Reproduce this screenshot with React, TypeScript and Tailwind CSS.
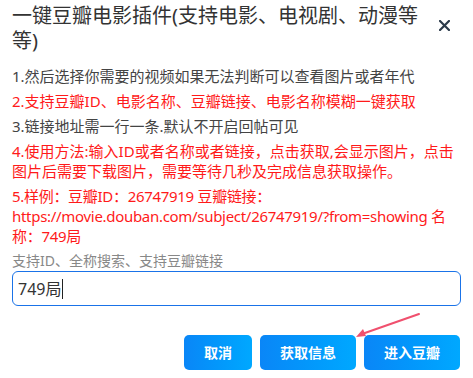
export default function App() {
  const font = {
    fontFamily: '"Noto Sans", "Noto Sans CJK SC", sans-serif',
  };

  return (
    <div
      className="relative h-[378px] w-[473px] overflow-hidden bg-white px-3 text-[#333]"
      style={font}
    >
      {/* header */}
      <div className="flex items-start justify-between pt-[3px]">
        <h1 className="w-[424px] text-[20px] leading-[25px] font-normal text-[#333]">
          一键豆瓣电影插件(支持电影、电视剧、动漫等等)
        </h1>
        <button className="mt-[17px] mr-[11px] text-[#2b3a4a]">
          <svg width="11" height="11" viewBox="0 0 11 11">
            <path
              d="M1 1 L10 10 M10 1 L1 10"
              stroke="currentColor"
              strokeWidth="2.2"
              strokeLinecap="square"
            />
          </svg>
        </button>
      </div>

      {/* notes */}
      <div className="mt-[13px] text-[15px] leading-[20px]">
        <p className="mb-[5px] text-[#444]">
          1.然后选择你需要的视频如果无法判断可以查看图片或者年代
        </p>
        <p className="mb-[5px] text-[#ff1a1a]">
          2.支持豆瓣ID、电影名称、豆瓣链接、电影名称模糊一键获取
        </p>
        <p className="mb-[5px] text-[#444]">
          3.链接地址需一行一条.默认不开启回帖可见
        </p>
        <p className="mb-[5px] text-[#ff1a1a]">
          4.使用方法:输入ID或者名称或者链接，点击获取,会显示图片，点击图片后需要下载图片，需要等待几秒及完成信息获取操作。
        </p>
        <p className="tracking-[-0.3px] text-[#ff1a1a]">
          5.样例：豆瓣ID：26747919 豆瓣链接：https://movie.douban.com/subject/26747919/?from=showing
          名称：749局
        </p>
      </div>

      {/* input */}
      <div className="mt-[6px] text-[14px] leading-[18px] text-[#888]">
        支持ID、全称搜索、支持豆瓣链接
      </div>
      <div className="mt-[1px] flex h-[35px] items-center rounded-[6px] border-[1.5px] border-[#1a73e8] px-[5px] text-[16px] text-[#333]">
        <span>749局</span>
        <span className="ml-px h-[20px] w-px bg-[#222]" />
      </div>

      {/* actions */}
      <div className="mt-[29px] flex justify-end gap-2 pr-px">
        <button className="h-[35px] w-[68px] rounded-[5px] bg-gradient-to-r from-[#0a86f7] to-[#00a8ff] text-[14px] font-bold text-white">
          取消
        </button>
        <button className="h-[35px] w-[96px] rounded-[5px] bg-gradient-to-r from-[#0a86f7] to-[#00a8ff] text-[14px] font-bold text-white">
          获取信息
        </button>
        <button className="h-[35px] w-[96px] rounded-[5px] bg-gradient-to-r from-[#0a86f7] to-[#00a8ff] text-[14px] font-bold text-white">
          进入豆瓣
        </button>
      </div>

      {/* annotation arrow */}
      <svg
        className="pointer-events-none absolute top-0 left-0"
        width="473"
        height="378"
      >
        <line
          x1="419"
          y1="314"
          x2="362"
          y2="334"
          stroke="#f0506e"
          strokeWidth="2"
          strokeLinecap="round"
        />
        <polygon points="356,337 363,329 366,336" fill="#f0506e" />
      </svg>
    </div>
  );
}
